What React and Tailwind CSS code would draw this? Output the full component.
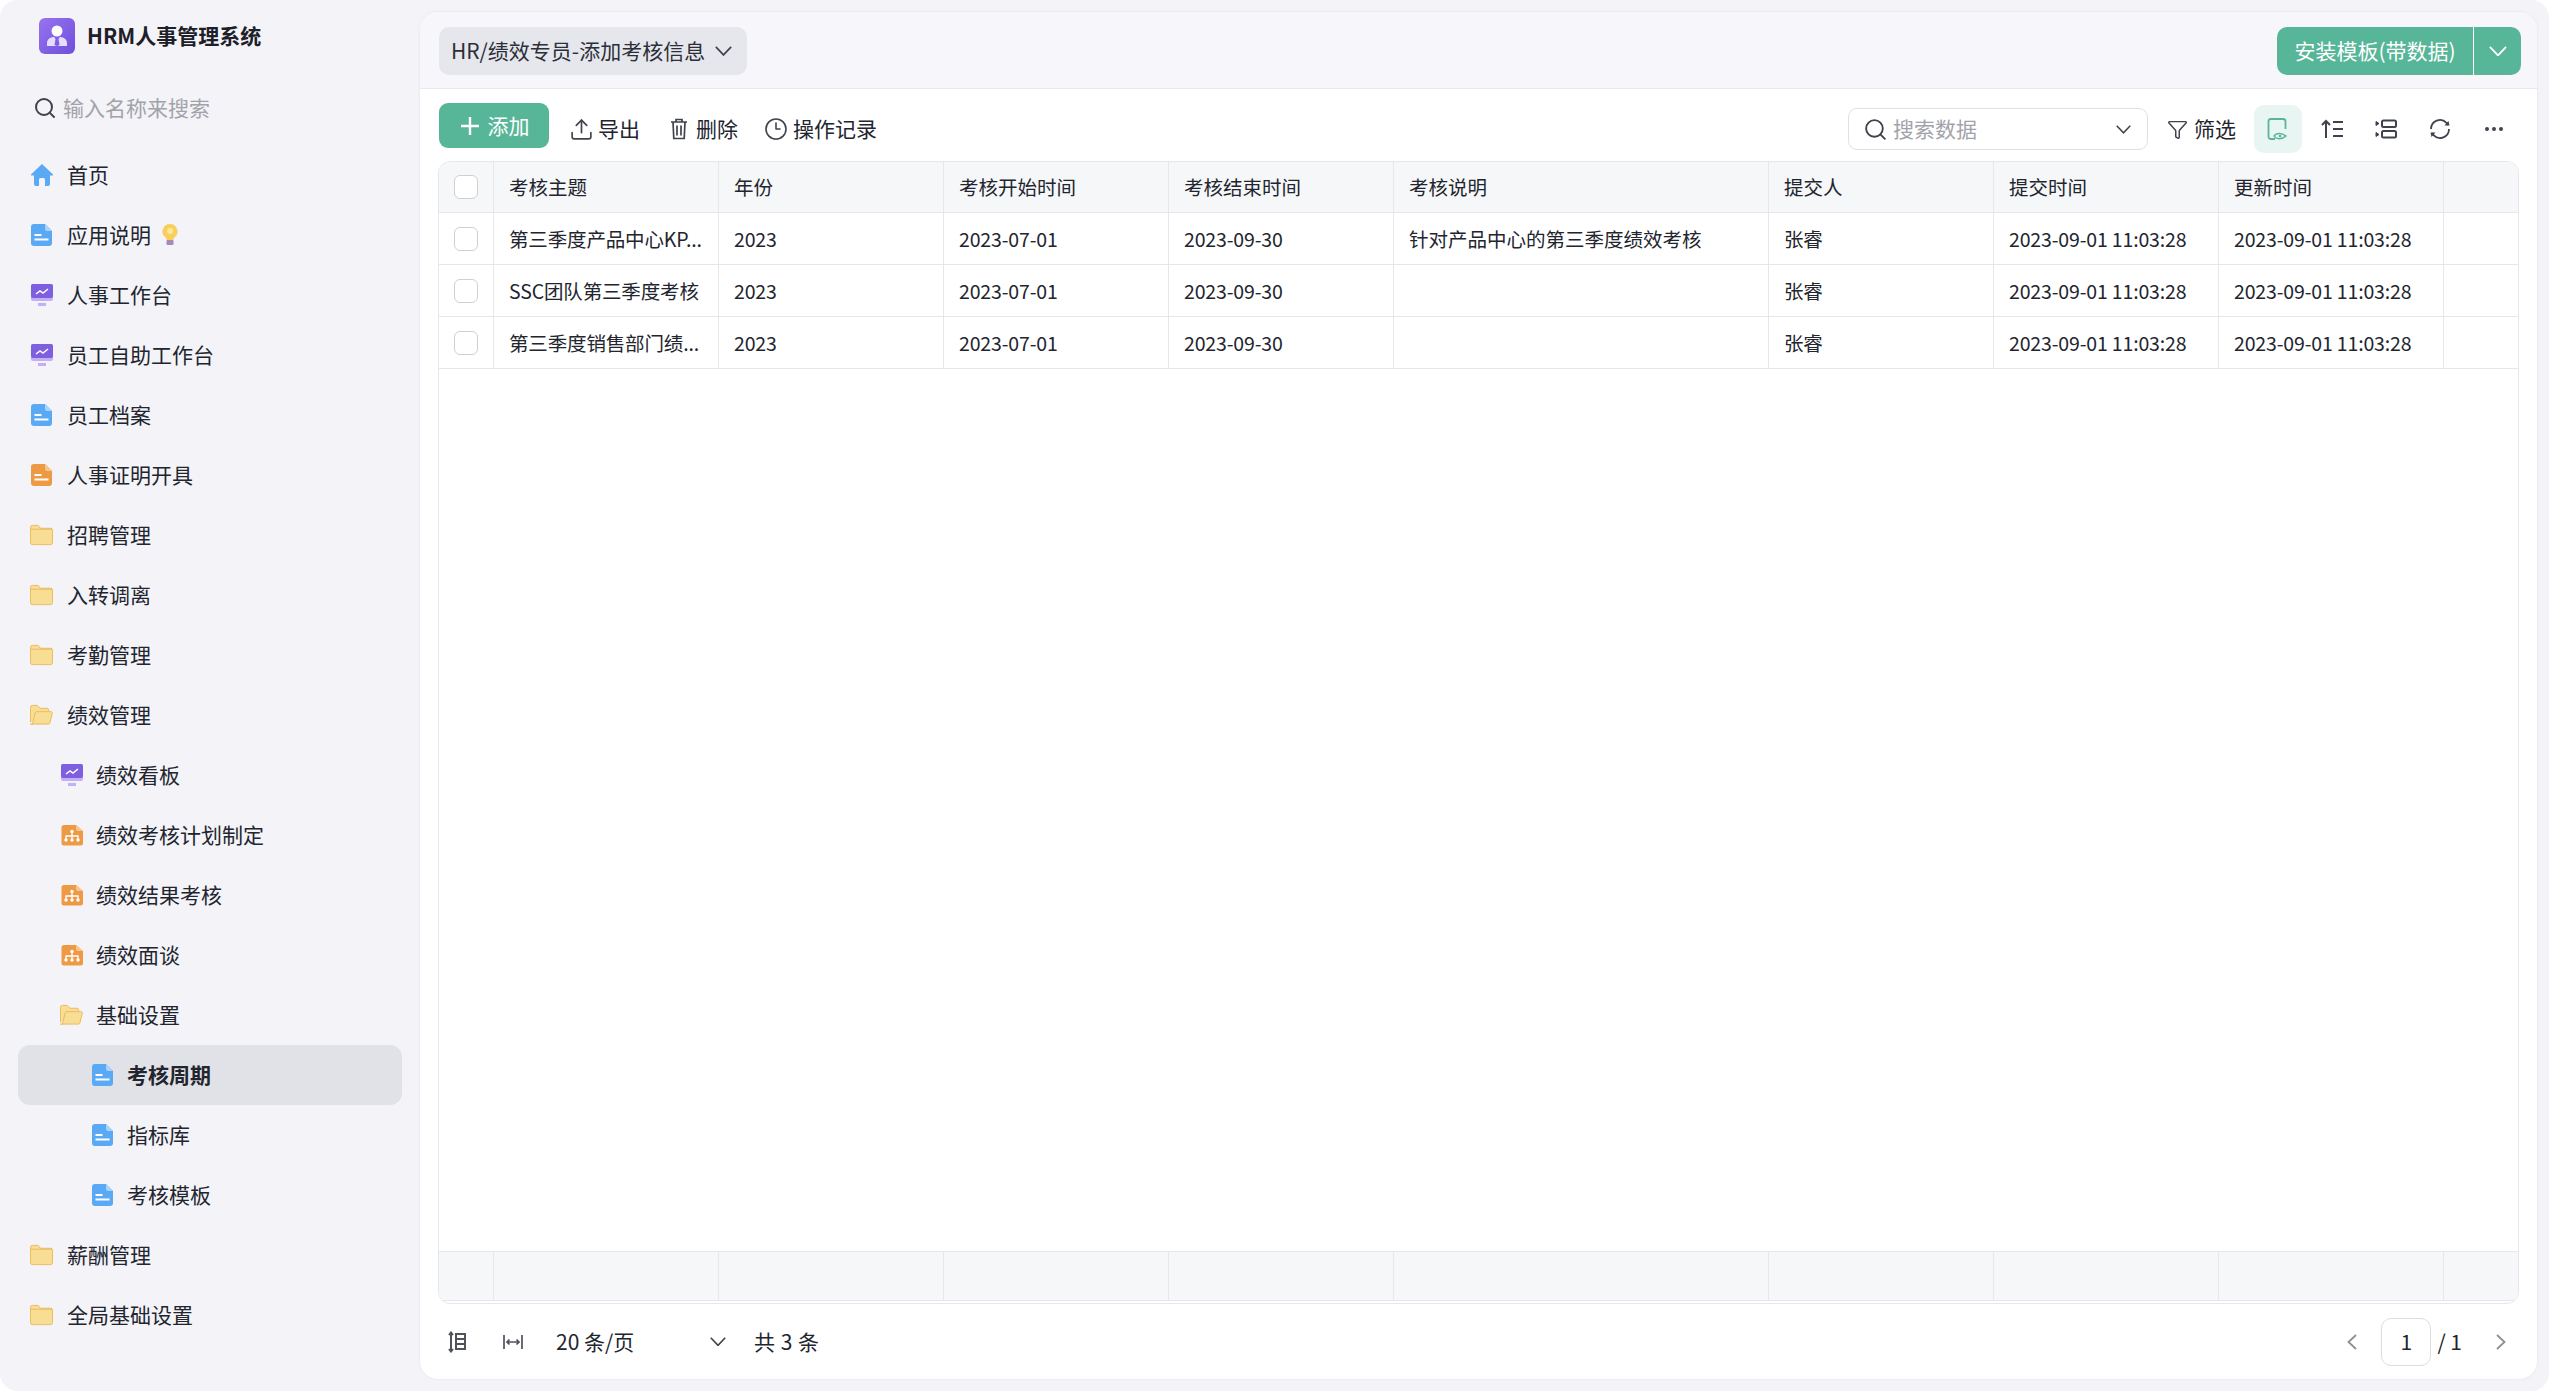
import { Clock3, Ellipsis, Funnel, Search, Upload } from 'lucide-react';

const COLS = 'grid grid-cols-[55px_225px_225px_225px_225px_375px_225px_225px_225px_1fr]';

const navItems = [
  { label: '首页', icon: 'home', level: 0 },
  { label: '应用说明', icon: 'fileBlue', level: 0, bulb: true },
  { label: '人事工作台', icon: 'monitor', level: 0 },
  { label: '员工自助工作台', icon: 'monitor', level: 0 },
  { label: '员工档案', icon: 'fileBlue', level: 0 },
  { label: '人事证明开具', icon: 'fileOrange', level: 0 },
  { label: '招聘管理', icon: 'folder', level: 0 },
  { label: '入转调离', icon: 'folder', level: 0 },
  { label: '考勤管理', icon: 'folder', level: 0 },
  { label: '绩效管理', icon: 'folderOpen', level: 0 },
  { label: '绩效看板', icon: 'monitor', level: 1 },
  { label: '绩效考核计划制定', icon: 'tree', level: 1 },
  { label: '绩效结果考核', icon: 'tree', level: 1 },
  { label: '绩效面谈', icon: 'tree', level: 1 },
  { label: '基础设置', icon: 'folderOpen', level: 1 },
  { label: '考核周期', icon: 'fileBlue', level: 2, active: true },
  { label: '指标库', icon: 'fileBlue', level: 2 },
  { label: '考核模板', icon: 'fileBlue', level: 2 },
  { label: '薪酬管理', icon: 'folder', level: 0 },
  { label: '全局基础设置', icon: 'folder', level: 0 },
];

const headers = ['考核主题', '年份', '考核开始时间', '考核结束时间', '考核说明', '提交人', '提交时间', '更新时间'];

const rows = [
  ['第三季度产品中心KP...', '2023', '2023-07-01', '2023-09-30', '针对产品中心的第三季度绩效考核', '张睿', '2023-09-01 11:03:28', '2023-09-01 11:03:28'],
  ['SSC团队第三季度考核', '2023', '2023-07-01', '2023-09-30', '', '张睿', '2023-09-01 11:03:28', '2023-09-01 11:03:28'],
  ['第三季度销售部门绩...', '2023', '2023-07-01', '2023-09-30', '', '张睿', '2023-09-01 11:03:28', '2023-09-01 11:03:28'],
];

// lucide's chevrons are too narrow here, so these are drawn at the reference's width
function Chevron({ width = 17, className = '' }) {
  return (
    <svg width={width} height={width * 0.6} viewBox="0 0 20 12" fill="none" stroke="currentColor" strokeWidth="2" className={`shrink-0 ${className}`}>
      <path d="M1 1l9 9.500L19 1" />
    </svg>
  );
}

function PageArrow({ flip }) {
  return (
    <svg width="10" height="16" viewBox="0 0 10 16" fill="none" stroke="#8d8f96" strokeWidth="1.800" className="shrink-0">
      <path d={flip ? 'M1 1l7.500 7L1 15' : 'M9 1L1.500 8 9 15'} />
    </svg>
  );
}

function FileIcon({ color, fold }) {
  return (
    <svg width="22" height="22" viewBox="0 0 22 22">
      <path d="M3 0h11l7 7v12a3 3 0 0 1-3 3H3a3 3 0 0 1-3-3V3a3 3 0 0 1 3-3z" fill={color} />
      <path d="M14 0l7 7h-5a2 2 0 0 1-2-2z" fill={fold} />
      <rect x="3.5" y="10" width="7" height="2" fill="#fff" />
      <rect x="3.5" y="14.5" width="14" height="2" fill="#fff" />
    </svg>
  );
}

function NavIcon({ type }) {
  if (type === 'home') {
    return (
      <svg width="22" height="22" viewBox="0 0 22 22">
        <path d="M11 0l11 10.5c.3.4 0 1-.5 1H19V20a2 2 0 0 1-2 2h-3v-6.500a1.500 1.500 0 0 0-1.500-1.500h-3A1.500 1.500 0 0 0 8 15.500V22H5a2 2 0 0 1-2-2v-8.500H.5c-.5 0-.8-.6-.5-1z" fill="#5aa9f5" />
      </svg>
    );
  }
  if (type === 'fileBlue') return <FileIcon color="#5aa9f5" fold="#a9d3fa" />;
  if (type === 'fileOrange') return <FileIcon color="#ee9a45" fold="#f7c48f" />;
  if (type === 'monitor') {
    return (
      <svg width="22" height="22" viewBox="0 0 22 22">
        <rect x="0" y="0" width="22" height="17" rx="2" fill="#c4aef5" />
        <rect x="0" y="0" width="22" height="14" rx="2" fill="#7d5fe0" />
        <path d="M7 19h8v3H7z" fill="#c4aef5" />
        <path d="M5 10l4-3 3 2 5-4" fill="none" stroke="#fff" strokeWidth="1.500" />
      </svg>
    );
  }
  if (type === 'tree') {
    return (
      <svg width="22" height="22" viewBox="0 0 22 22">
        <path d="M3 1h12l7 6v12a2.500 2.500 0 0 1-2.500 2.500H3A2.500 2.500 0 0 1 .5 19V3.500A2.500 2.500 0 0 1 3 1z" fill="#ee9a45" />
        <path d="M15 1l7 6h-5a2 2 0 0 1-2-2z" fill="#f7c48f" />
        <path d="M11 7v8M5 15v-3h12v3" fill="none" stroke="#fff" strokeWidth="1.300" />
        <circle cx="11" cy="7.500" r="1.700" fill="#fff" />
        <circle cx="5" cy="16" r="1.700" fill="#fff" />
        <circle cx="11" cy="16" r="1.700" fill="#fff" />
        <circle cx="17" cy="16" r="1.700" fill="#fff" />
      </svg>
    );
  }
  if (type === 'folderOpen') {
    return (
      <svg width="24" height="22" viewBox="0 0 24 22" className="-ml-px">
        <path d="M.5 18.500V3a2 2 0 0 1 2-2h5l3 3h7a2 2 0 0 1 2 2v1" fill="#f8dd94" stroke="#ecb95c" strokeWidth="1" />
        <path d="M2.500 20.500l3-12a1.500 1.500 0 0 1 1.500-1h15c1 0 1.500.7 1.300 1.500l-2.600 10.500a1.500 1.500 0 0 1-1.500 1H.5z" fill="#f8dd94" stroke="#ecb95c" strokeWidth="1" />
      </svg>
    );
  }
  return (
    <svg width="24" height="22" viewBox="0 0 24 22" className="-ml-px">
      <path d="M.5 3a2 2 0 0 1 2-2h6l2.500 3h10.500a2 2 0 0 1 2 2v13a2 2 0 0 1-2 2h-19a2 2 0 0 1-2-2z" fill="#f8dd94" stroke="#ecb95c" strokeWidth="1" />
      <path d="M1 5h22" stroke="#ecb95c" strokeWidth="1" />
    </svg>
  );
}

function Bulb() {
  return (
    <svg width="16" height="22" viewBox="0 0 16 22" className="ml-[11px]">
      <path d="M8 0a7.500 7.500 0 0 1 4.500 13.500c-.8.7-1 1.500-1 2.500h-7c0-1-.2-1.800-1-2.500A7.500 7.500 0 0 1 8 0z" fill="#f7cf5c" />
      <circle cx="8" cy="7" r="3" fill="#fbe69a" />
      <rect x="4.500" y="16" width="7" height="5" rx="1" fill="#a48ab8" />
    </svg>
  );
}

function NavRow({ item }) {
  const indent = ['pl-[13px]', 'pl-[43px]', 'pl-[74px]'][item.level];
  const gap = item.level === 0 ? 'mr-[14px]' : 'mr-[13px]';
  return (
    <div className={`flex h-[60px] items-center rounded-[12px] ${indent} ${item.active ? 'bg-[#e1e2e8] font-bold' : ''}`}>
      <span className={`flex w-[22px] shrink-0 ${gap}`}>
        <NavIcon type={item.icon} />
      </span>
      <span>{item.label}</span>
      {item.bulb && <Bulb />}
    </div>
  );
}

function Sidebar() {
  return (
    <aside className="flex w-[420px] shrink-0 flex-col px-[18px] text-[21px] text-[#22252e]">
      <div className="flex h-[72px] items-center gap-[12px] pl-[21px]">
        <span className="flex h-[36px] w-[36px] items-center justify-center rounded-[6px] bg-gradient-to-br from-[#9873ee] to-[#6f4fdc]">
          <svg width="22" height="24" viewBox="0 0 22 24">
            <circle cx="11" cy="7" r="5.500" fill="#fff" />
            <path d="M1 22v-3c0-4 4-6 7-6l1.500 2L8.500 21l2.500 1 2.500-1-1-6L14 13c3 0 7 2 7 6v3z" fill="#e6dcfb" />
          </svg>
        </span>
        <span className="font-bold text-[#1d2029]">HRM人事管理系统</span>
      </div>
      <div className="flex h-[73px] items-center gap-[6px] pb-px pl-[15px] text-[#a2a3aa]">
        <Search size={24} className="text-[#40434d]" strokeWidth={2} />
        <span>输入名称来搜索</span>
      </div>
      {navItems.map((item) => (
        <NavRow key={item.label} item={item} />
      ))}
    </aside>
  );
}

function ToolIcon({ children, className = '' }) {
  return <span className={`flex h-[48px] w-[54px] items-center justify-center text-[#40434d] ${className}`}>{children}</span>;
}

function Toolbar() {
  return (
    <div className="flex h-[72px] items-center pl-[19px] pr-[16px] pt-[8px] text-[21px] text-[#22252e]">
      <button className="mb-[7px] flex h-[45px] w-[110px] items-center justify-center gap-[8px] rounded-[9px] bg-[#58b698] pl-[1px] text-white">
        <svg width="20" height="20" viewBox="0 0 20 20" fill="none" stroke="currentColor" strokeWidth="2.400">
          <path d="M10 1v18M1 10h18" />
        </svg>
        <span>添加</span>
      </button>
      <span className="ml-[20px] flex items-center gap-[4px]">
        <Upload size={25} strokeWidth={1.600} className="text-[#40434d]" />
        导出
      </span>
      <span className="ml-[29px] flex items-center gap-[7px]">
        <svg width="20" height="22" viewBox="0 0 20 22" fill="none" stroke="#40434d" strokeWidth="1.700">
          <path d="M2 4h16M7 4V1.500h6V4M4 4l.8 16.500h10.400L16 4M8 7.500v10M12 7.500v10" />
        </svg>
        删除
      </span>
      <span className="ml-[26px] flex items-center gap-[5px]">
        <Clock3 size={24} strokeWidth={1.600} className="text-[#40434d]" />
        操作记录
      </span>
      <div className="ml-auto flex h-[42px] w-[300px] items-center rounded-[9px] border border-[#dfe0e6] pl-[14px] pr-[16px] text-[#a2a3aa]">
        <Search size={25} strokeWidth={1.800} className="mr-[5px] text-[#40434d]" />
        <span className="flex-1">搜索数据</span>
        <Chevron width={15} className="text-[#40434d]" />
      </div>
      <span className="ml-[19px] flex items-center gap-[6px]">
        <Funnel size={21} strokeWidth={1.700} className="text-[#40434d]" />
        筛选
      </span>
      <span className="ml-[18px] flex h-[48px] w-[48px] items-center justify-center rounded-[10px] bg-[#e8f5f2]">
        <svg width="22" height="24" viewBox="0 0 22 24" fill="none" stroke="#58b698" strokeWidth="1.800">
          <path d="M8 22H4a2.500 2.500 0 0 1-2.500-2.500v-15A2.500 2.500 0 0 1 4 2h12a2.500 2.500 0 0 1 2.500 2.500V12" />
          <path d="M7 19c2-3.500 8-3.500 12 0-4 3.500-10 3.500-12 0z" strokeWidth="1.500" />
          <circle cx="13" cy="19" r="1.300" fill="#58b698" stroke="none" />
        </svg>
      </span>
      <ToolIcon className="ml-[3px]">
        <svg width="22" height="20" viewBox="0 0 22 20" fill="none" stroke="currentColor" strokeWidth="2">
          <path d="M5 19V2M1 6l4-4 4 4M12 3h10M12 10h10M12 17h10" />
        </svg>
      </ToolIcon>
      <ToolIcon>
        <svg width="22" height="20" viewBox="0 0 22 20" fill="none" stroke="currentColor" strokeWidth="2">
          <rect x="7" y="1.500" width="14" height="6.500" rx="1.500" />
          <rect x="7" y="12" width="14" height="6.500" rx="1.500" />
          <path d="M1 2.500l3 2-3 2zM1 13.500l3 2-3 2z" fill="currentColor" strokeWidth="1" />
        </svg>
      </ToolIcon>
      <ToolIcon>
        <svg width="22" height="22" viewBox="0 0 22 22" fill="none" stroke="currentColor" strokeWidth="1.800">
          <path d="M2 11a9 9 0 0 1 15.500-6.200L19 7M20 11a9 9 0 0 1-15.500 6.200L3 15" />
          <path d="M15.500 7.500H20.500L19.500 3zM6.500 14.500H1.500L2.500 19z" fill="currentColor" stroke="none" />
        </svg>
      </ToolIcon>
      <ToolIcon>
        <Ellipsis size={24} strokeWidth={2} />
      </ToolIcon>
    </div>
  );
}

function Checkbox() {
  return <span className="h-[24px] w-[24px] rounded-[6px] border border-[#cfd0d6] bg-white" />;
}

function Table() {
  return (
    <div className="mx-[18px] flex min-h-0 flex-1 flex-col overflow-hidden rounded-[12px] border border-[#e6e7ec] text-[19.500px] text-[#22252e]">
      <div className={`${COLS} h-[51px] shrink-0 border-b border-[#e6e7ec] bg-[#f6f7f9]`}>
        <div className="flex items-center justify-center border-r border-[#e6e7ec]">
          <Checkbox />
        </div>
        {headers.map((h) => (
          <div key={h} className="flex items-center border-r border-[#e6e7ec] px-[15px]">{h}</div>
        ))}
        <div />
      </div>
      {rows.map((row) => (
        <div key={row[0]} className={`${COLS} h-[52px] shrink-0 border-b border-[#e6e7ec]`}>
          <div className="flex items-center justify-center border-r border-[#e6e7ec]">
            <Checkbox />
          </div>
          {row.map((cell, i) => (
            <div key={i} className={`flex min-w-0 items-center border-r border-[#e6e7ec] px-[15px] ${i === 4 ? '' : 'tracking-[-0.15px]'}`}>
              <span className="whitespace-nowrap">{cell}</span>
            </div>
          ))}
          <div />
        </div>
      ))}
      <div className="flex-1" />
      <div className={`${COLS} mb-[2px] h-[50px] shrink-0 border-t border-b border-[#e6e7ec] bg-[#f6f7f9]`}>
        {Array.from({ length: 10 }, (_, i) => (
          <div key={i} className={i < 9 ? 'border-r border-[#e6e7ec]' : ''} />
        ))}
      </div>
    </div>
  );
}

function Pagination() {
  return (
    <div className="flex h-[75px] shrink-0 items-center pl-[28px] pr-[31px] text-[21px] text-[#22252e]">
      <svg width="18" height="22" viewBox="0 0 18 22" fill="none" stroke="#50535c" strokeWidth="2">
        <path d="M8 3h9v15H8zM8 8h9M8 13h9M3 2v18M1 4l2-2.500L5 4M1 18l2 2.500L5 18" />
      </svg>
      <svg width="20" height="16" viewBox="0 0 20 16" fill="none" stroke="#50535c" strokeWidth="1.700" className="ml-[37px]">
        <path d="M1 1v14M19 1v14M4 8h12M6.500 5.500L4 8l2.500 2.500M13.500 5.500L16 8l-2.500 2.500" />
      </svg>
      <span className="ml-[33px] w-[154px]">20 条/页</span>
      <Chevron width={16} className="text-[#40434d]" />
      <span className="ml-[28px] [word-spacing:1px]">共 3 条</span>
      <span className="ml-auto"><PageArrow /></span>
      <span className="ml-[24px] flex h-[48px] w-[50px] items-center justify-center rounded-[10px] border border-[#dcdde3]">1</span>
      <span className="ml-[6px]">/ 1</span>
      <span className="ml-[34px]"><PageArrow flip /></span>
    </div>
  );
}

export default function App() {
  return (
    <div className="h-[1391px] w-[2549px] bg-white font-['Noto_Sans_CJK_SC','Noto_Sans',sans-serif]">
      <div className="flex h-full rounded-[18px] bg-[#f3f3f8] pr-[12px]">
        <Sidebar />
        <main className="my-[12px] flex min-w-0 flex-1 flex-col overflow-hidden rounded-[18px] bg-white shadow-[0_0_3px_rgba(30,30,60,0.08)]">
          <header className="flex h-[77px] shrink-0 items-center justify-between border-b border-[#e8e9ee] bg-[#f7f7fb] pl-[19px] pr-[16px] pt-[2px] text-[21px]">
            <div className="flex h-[48px] w-[308px] items-center gap-[10px] rounded-[10px] bg-[#e6e7ec] pl-[12px] text-[#2c2f38]">
              <span className="whitespace-nowrap">HR/绩效专员-添加考核信息</span>
              <Chevron width={17} className="text-[#40434d]" />
            </div>
            <div className="flex h-[48px] w-[244px] overflow-hidden rounded-[10px] bg-[#58b698] text-white">
              <span className="flex w-[197px] items-center justify-center border-r border-white">安装模板(带数据)</span>
              <span className="flex flex-1 items-center justify-center">
                <Chevron width={18} />
              </span>
            </div>
          </header>
          <Toolbar />
          <Table />
          <Pagination />
        </main>
      </div>
    </div>
  );
}
